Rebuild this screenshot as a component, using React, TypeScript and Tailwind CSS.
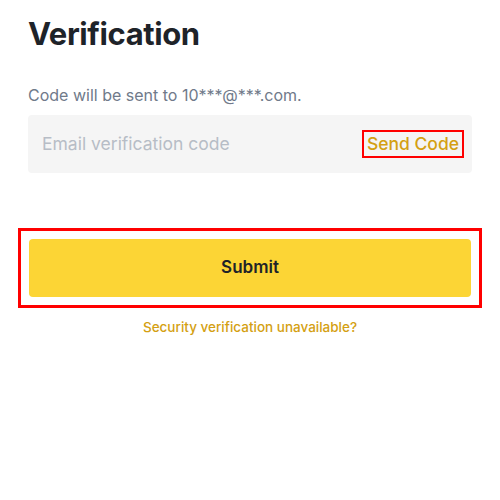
export default function App() {
  return (
    <div
      className="w-[500px] h-[500px] bg-white flex flex-col px-[28px] pt-[14px]"
      style={{ fontFamily: "Inter, 'Noto Sans', sans-serif" }}
    >
      <h1 className="text-[31px] leading-[40px] font-bold text-[#1e2329] tracking-[-0.4px]">
        Verification
      </h1>
      <p className="mt-[31px] text-[16px] leading-[20px] text-[#707a8a]">
        Code will be sent to 10***@***.com.
      </p>
      <div className="mt-[10px] h-[58px] rounded-[4px] bg-[#f5f5f5] flex items-center justify-between pl-[14px] pr-[8px]">
        <span className="text-[17.5px] text-[#b7bdc6]">Email verification code</span>
        <span className="border-2 border-[#ff0000] px-[3px] h-[28px] flex items-center text-[17.5px] font-medium text-[#d4a012]">
          Send Code
        </span>
      </div>
      <div className="mt-[55px] -mx-[10px] border-[3px] border-[#ff0000] p-[8px]">
        <button className="w-full h-[58px] rounded-[4px] bg-[#fcd535] text-[17px] font-semibold text-[#1e2329] flex items-center justify-center">
          Submit
        </button>
      </div>
      <p className="mt-[9px] text-center text-[13.5px] leading-[20px] font-medium text-[#d4a012]">
        Security verification unavailable?
      </p>
    </div>
  );
}
